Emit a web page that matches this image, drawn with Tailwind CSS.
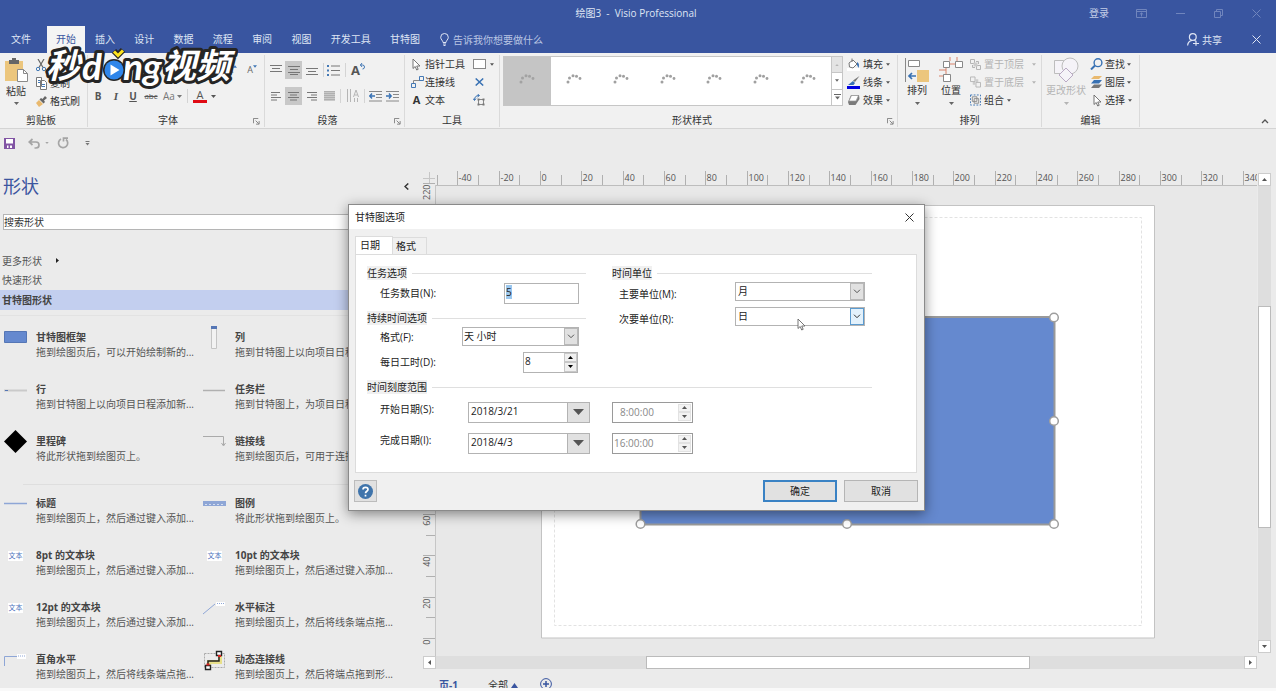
<!DOCTYPE html>
<html lang="zh-CN">
<head>
<meta charset="utf-8">
<title>绘图3 - Visio Professional</title>
<script src="https://cdn.jsdelivr.net/npm/@tailwindcss/browser@4"></script>
</head>
<body class="relative flex h-screen flex-col overflow-hidden bg-[#ebebeb] font-['Open_Sans','Noto_Sans_CJK_SC',sans-serif] text-[10px] leading-[14px] text-[#333]">
<svg class="hidden">
  <symbol id="dn" viewBox="0 0 5 3"><path d="M0 0h5L2.500 3z" fill="currentColor"/></symbol>
  <symbol id="up" viewBox="0 0 5 3"><path d="M0 3h5L2.500 0z" fill="currentColor"/></symbol>
  <symbol id="launch" viewBox="0 0 8 8"><path d="M.5 6V.5H6M3 3l3.500 3.500M7 3.500V7H3.500" fill="none" stroke="#777"/></symbol>
  <symbol id="chev" viewBox="0 0 8 5"><path d="M1 .7l3 3 3-3" fill="none" stroke="currentColor"/></symbol>
  <symbol id="cursor" viewBox="0 0 9 13"><path d="M1 1v9.500l2.200-2 1.500 3.500 1.500-.7-1.500-3.300H8z" fill="#fff" stroke="#666" stroke-width=".9"/></symbol>
  <symbol id="dots" viewBox="0 0 16 16"><g fill="currentColor"><circle cx="2" cy="9" r="1.500"/><circle cx="3.500" cy="5" r="1.500"/><circle cx="7" cy="2.800" r="1.500"/><circle cx="10.500" cy="3.300" r="1.500"/><circle cx="14" cy="5.500" r="1.400"/></g></symbol>
</svg>

<header class="shrink-0 bg-[#3955a0] text-[#dfe5f4]">
  <div class="relative flex h-[26px] items-center justify-end">
    <h1 class="absolute inset-x-0 pr-[4px] text-center whitespace-pre">绘图3  -  Visio Professional</h1>
    <button class="relative mr-[27px] text-[#c3cde6]">登录</button>
    <div class="relative flex items-center gap-[29px] pr-[15px] text-[#7085bd]">
      <button aria-label="功能区显示选项"><svg class="h-[9px] w-[11px]" viewBox="0 0 11 9" fill="none" stroke="currentColor"><path d="M.5.500h10v8H.5zM.5 2.500h10M5.500 7.500V4M3.800 5.500l1.700-1.600 1.700 1.600"/></svg></button>
      <button aria-label="最小化"><svg class="h-[9px] w-[9px]" viewBox="0 0 9 9" stroke="currentColor"><path d="M0 4.500h9"/></svg></button>
      <button aria-label="还原"><svg class="h-[9px] w-[9px]" viewBox="0 0 9 9" fill="none" stroke="currentColor"><path d="M.5 2.500h6v6h-6zM2.500 2V.5h6v6H7"/></svg></button>
      <button aria-label="关闭"><svg class="h-[9px] w-[9px]" viewBox="0 0 9 9" stroke="currentColor"><path d="M.5.500l8 8M8.500.500l-8 8"/></svg></button>
    </div>
  </div>
  <div class="flex h-[27px] items-center">
    <button class="w-[47px] pr-[5px] pb-[2px]">文件</button>
    <button class="mr-[10px] h-full w-[38px] bg-[#f4f4f4] pb-[2px] text-[#3955a0]">开始</button>
    <nav class="flex w-[325px] justify-between pb-[2px]"><button>插入</button><button>设计</button><button>数据</button><button>流程</button><button>审阅</button><button>视图</button><button>开发工具</button><button>甘特图</button></nav>
    <label class="ml-[20px] flex items-center gap-[4px]">
      <svg class="h-[13px] w-[9px]" viewBox="0 0 9 13" fill="none" stroke="currentColor"><path d="M3 9.500C3 7.500.7 6.800.7 4.300a3.800 3.800 0 0 1 7.600 0C8.300 6.800 6 7.500 6 9.500zM3 11h3M3.500 12.500h2"/></svg>
      <input class="w-[110px] bg-transparent placeholder:text-[#b9c5e3]" placeholder="告诉我你想要做什么" aria-label="告诉我你想要做什么">
    </label>
    <button class="ml-auto flex items-center gap-[3px]"><svg class="h-[13px] w-[12px]" viewBox="0 0 12 13" fill="none" stroke="currentColor" stroke-width="1.200"><circle cx="5.800" cy="4" r="3.400"/><path d="M.6 12.500C.8 9.500 2.500 8 5 7.400M7.500 7.200l1 .8M6 10.500h6M9 7.800v5"/></svg>共享</button>
    <button class="mx-[15px] ml-[30px]" aria-label="关闭文档"><svg class="h-[9px] w-[9px]" viewBox="0 0 9 9" stroke="currentColor"><path d="M.5.500l8 8M8.500.500l-8 8"/></svg></button>
  </div>
</header>

<section class="flex h-[76px] shrink-0 border-b border-[#d4d4d4] bg-[#f1f1f1] pt-[2px] pb-px">
  <div class="flex w-[88px] flex-col border-r border-[#dadada]">
    <div class="flex flex-1 gap-[8px] pl-[4px]">
      <button class="flex w-[24px] flex-col items-center">
        <svg class="h-[27px] w-[24px]" viewBox="0 0 24 27"><path d="M1 6h18v20H1z" fill="#ecc67d"/><path d="M5 5h10v4H5zM8 3h4v3H8z" fill="#666"/><path d="M13.500 14.500h6l4 4v8h-10z" fill="#fff" stroke="#8a8a8a"/><path d="M19.500 14.500v4h4" fill="none" stroke="#8a8a8a"/></svg>
        <span class="pt-[2px] whitespace-nowrap">粘贴</span><svg class="mt-[4px] h-[3px] w-[5px] text-[#666]"><use href="#dn"/></svg>
      </button>
      <div class="flex flex-col pt-px">
        <button class="flex h-[18px] items-center gap-[4px]"><svg class="h-[13px] w-[10px]" viewBox="0 0 10 13" fill="none"><path d="M2 0l5 8.500M8 0L3 8.500" stroke="#666" stroke-width="1.200"/><circle cx="2" cy="10" r="1.700" stroke="#4479b5"/><circle cx="8" cy="10" r="1.700" stroke="#4479b5"/></svg>剪切</button>
        <button class="flex h-[18px] items-center gap-[3px]"><svg class="h-[13px] w-[11px]" viewBox="0 0 11 13" fill="#fff" stroke="#777"><path d="M.5.500h5v9h-5zM4.500 3.500h4l2 2v7h-6z"/><path d="M6 7.500h3M6 9.500h3M2 3.500h2M2 5.500h2" stroke="#4479b5"/></svg>复制</button>
        <button class="flex h-[18px] items-center gap-[3px]"><svg class="h-[11px] w-[11px]" viewBox="0 0 11 11"><path d="M0 7l3-3 4 4-4 3z" fill="#e9b96e"/><path d="M3.500 3.500l1.500-1.500 1.500 1 2.500-3 2 2-3 2.500 1 1.500-1.500 1.500z" fill="#666"/></svg>格式刷</button>
      </div>
    </div>
    <div class="pr-[5px] text-center">剪贴板</div>
  </div>

  <div class="flex w-[177px] flex-col border-r border-[#dadada] pt-[2px]">
    <div class="flex h-[26px] items-center justify-end gap-[10px] pr-[7px] text-[#666]"><button class="flex items-start text-[9px] leading-[14px]">A<svg class="mt-[2px] h-[3px] w-[4px] text-[#3f77b5]"><use href="#up"/></svg></button><button class="flex items-start text-[9px] leading-[14px]">A<svg class="mt-[2px] h-[3px] w-[4px] text-[#3f77b5]"><use href="#dn"/></svg></button></div>
    <div class="flex h-[26px] items-center pl-[5px] text-[#555]">
      <button class="w-[10px] font-bold">B</button><button class="ml-[8px] w-[10px] font-['Liberation_Serif'] text-[11px] font-bold italic">I</button><button class="ml-[7px] w-[10px] font-bold underline">U</button><button class="ml-[6px] w-[14px] text-[8px] line-through">abc</button><button class="ml-[5px] flex items-center gap-[2px] text-[#777]">Aa<svg class="h-[3px] w-[5px]"><use href="#dn"/></svg></button>
      <span class="mx-[5px] h-[14px] w-px bg-[#d4d4d4]"></span>
      <button class="flex items-center gap-[4px]"><span class="w-[14px] border-b-[3px] border-[#e00b14] text-[11px] leading-[10px]">A</span><svg class="h-[3px] w-[5px]"><use href="#dn"/></svg></button>
    </div>
    <div class="relative mt-auto text-center pr-[16px]">字体<svg class="absolute right-[4px] bottom-[2px] h-[7px] w-[7px]"><use href="#launch"/></svg></div>
  </div>

  <div class="flex w-[140px] flex-col border-r border-[#dadada] pt-[2px]">
    <div class="flex h-[26px] items-center gap-[1px] pl-[2px]">
      <button class="grid h-[18px] w-[17px] place-items-center" aria-label="顶端对齐"><svg class="h-[11px] w-[12px]" viewBox="0 0 12 11" stroke="#777"><path d="M0 .5h12M2 3.500h8M0 6.500h12" /></svg></button>
      <button class="grid h-[18px] w-[17px] place-items-center bg-[#c8c8c8]" aria-label="中部对齐"><svg class="h-[11px] w-[12px]" viewBox="0 0 12 11" stroke="#777"><path d="M0 1.500h12M2 4.500h8M0 7.500h12M2 9.500h8"/></svg></button>
      <button class="grid h-[18px] w-[17px] place-items-center" aria-label="底端对齐"><svg class="h-[11px] w-[12px]" viewBox="0 0 12 11" stroke="#777"><path d="M0 3.500h12M2 6.500h8M0 9.500h12"/></svg></button>
      <span class="mx-[2px] h-[14px] w-px bg-[#d4d4d4]"></span>
      <button aria-label="项目符号"><svg class="h-[13px] w-[13px]" viewBox="0 0 13 13"><path d="M4 2h9M4 6.500h9M4 11h9" stroke="#777"/><path d="M0 1h2v2H0zM0 5.500h2v2H0zM0 10h2v2H0z" fill="#4479b5"/></svg></button>
      <span class="mx-[4px] h-[14px] w-px bg-[#d4d4d4]"></span>
      <button class="flex text-[13px] font-bold text-[#555]" aria-label="旋转文本">A<svg class="h-[8px] w-[5px]" viewBox="0 0 5 8" fill="none" stroke="#4479b5"><path d="M0 2h2.500a2 2 0 0 1 0 4M2 0L.5 2 2 4"/></svg></button>
    </div>
    <div class="flex h-[26px] items-center gap-[1px] pl-[2px]">
      <button class="grid h-[18px] w-[17px] place-items-center" aria-label="左对齐"><svg class="h-[9px] w-[10px]" viewBox="0 0 10 9" stroke="#777"><path d="M0 .5h9M0 3h6M0 5.500h10M0 8h6"/></svg></button>
      <button class="grid h-[18px] w-[17px] place-items-center bg-[#c8c8c8]" aria-label="居中"><svg class="h-[9px] w-[11px]" viewBox="0 0 11 9" stroke="#777"><path d="M0 .5h11M2 3h7M0 5.500h11M2 8h7"/></svg></button>
      <button class="grid h-[18px] w-[17px] place-items-center" aria-label="右对齐"><svg class="h-[9px] w-[10px]" viewBox="0 0 10 9" stroke="#777"><path d="M0 .5h10M4 3h6M0 5.500h10M4 8h6"/></svg></button>
      <button class="grid h-[18px] w-[16px] place-items-center" aria-label="两端对齐"><svg class="h-[10px] w-[11px]" viewBox="0 0 11 10" stroke="#b0b0b0"><path d="M0 0h11v10H0z" fill="#c9c9c9" stroke="none"/><path d="M0 .5h11M0 2.500h11M0 4.500h11M0 6.500h11M0 8.500h11"/></svg></button>
      <span class="mx-[2px] h-[14px] w-px bg-[#d4d4d4]"></span>
      <button class="ml-[2px]" aria-label="文字方向"><svg class="h-[14px] w-[14px]" viewBox="0 0 14 14" fill="none" stroke="#b5b5b5"><path d="M1.500 0v13M4.500 0v13M7.500 8l2.500-7 2.500 7M8.500 6h3M8.500 13v-4M11.500 13v-4"/></svg></button>
      <span class="mx-[3px] h-[14px] w-px bg-[#d4d4d4]"></span>
      <button aria-label="减少缩进"><svg class="h-[11px] w-[13px]" viewBox="0 0 13 11" fill="none"><path d="M0 .5h13M7 3.500h6M7 6.500h6M0 10h13" stroke="#888"/><path d="M6 5H1M3 2.500L.8 5 3 7.500" stroke="#3871b3" stroke-width="1.400"/></svg></button>
      <button class="ml-[3px]" aria-label="增加缩进"><svg class="h-[11px] w-[13px]" viewBox="0 0 13 11" fill="none"><path d="M0 .5h13M7 3.500h6M7 6.500h6M0 10h13" stroke="#888"/><path d="M0 5h5M3 2.500L5.200 5 3 7.500" stroke="#3871b3" stroke-width="1.400"/></svg></button>
    </div>
    <div class="relative mt-auto pr-[14px] text-center">段落<svg class="absolute right-[3px] bottom-[2px] h-[7px] w-[7px]"><use href="#launch"/></svg></div>
  </div>

  <div class="flex w-[95px] flex-col border-r border-[#dadada]">
    <div class="grid h-[54px] grid-cols-[61px_1fr] grid-rows-3 items-center pl-[7px]">
      <button class="flex items-center gap-[4px]"><svg class="h-[13px] w-[9px]"><use href="#cursor"/></svg>指针工具</button>
      <button class="flex items-center gap-[4px]" aria-label="矩形"><span class="h-[10px] w-[13px] border border-[#888] bg-white"></span><svg class="h-[3px] w-[4px] text-[#555]"><use href="#dn"/></svg></button>
      <button class="flex items-center gap-[1px]"><svg class="-ml-[1px] h-[12px] w-[13px]" viewBox="0 0 13 12" fill="none"><path d="M2.500 7V4.500H9" stroke="#888"/><path d="M.5 7.500h4v4h-4zM8.500.500h4v4h-4z" stroke="#4479b5"/></svg>连接线</button>
      <button class="pl-[2px]" aria-label="连接点"><svg class="h-[8px] w-[9px]" viewBox="0 0 9 8" stroke="#3871b3" stroke-width="1.500"><path d="M.7.500l7.500 7M8.200.500l-7.500 7"/></svg></button>
      <button class="flex items-center gap-[4px]"><b class="w-[9px] text-[11px]">A</b>文本</button>
      <button aria-label="文本块"><svg class="h-[12px] w-[12px]" viewBox="0 0 12 12" fill="none"><path d="M5.500 5.500h5v5h-5z" stroke="#888"/><path d="M4.500 4.500h2v2h-2zM9.500 4.500h2v2h-2zM4.500 9.500h2v2h-2zM9.500 9.500h2v2h-2z" fill="#777"/><path d="M1.500 6C1.500 3 3 1.500 6 1.500M4.500 0L6.500 1.500 4.500 3M0 4.500L1.500 6.500 3 4.500" stroke="#3871b3"/></svg></button>
    </div>
    <div class="mt-auto text-center">工具</div>
  </div>

  <div class="flex w-[398px] flex-col border-r border-[#dadada] pl-[3px]">
    <div class="flex h-[54px]">
      <div class="mt-px flex h-[50px] flex-1 border border-[#c6c6c6] bg-white text-[#a0a0a0]">
        <button class="grid flex-1 place-items-center bg-[#c5c5c5] text-[#a2a2a2]" aria-label="样式1"><svg class="h-[16px] w-[16px]"><use href="#dots"/></svg></button>
        <button class="grid flex-1 place-items-center" aria-label="样式2"><svg class="h-[16px] w-[16px]"><use href="#dots"/></svg></button>
        <button class="grid flex-1 place-items-center" aria-label="样式3"><svg class="h-[16px] w-[16px]"><use href="#dots"/></svg></button>
        <button class="grid flex-1 place-items-center" aria-label="样式4"><svg class="h-[16px] w-[16px]"><use href="#dots"/></svg></button>
        <button class="grid flex-1 place-items-center" aria-label="样式5"><svg class="h-[16px] w-[16px]"><use href="#dots"/></svg></button>
        <button class="grid flex-1 place-items-center" aria-label="样式6"><svg class="h-[16px] w-[16px]"><use href="#dots"/></svg></button>
        <button class="grid flex-1 place-items-center" aria-label="样式7"><svg class="h-[16px] w-[16px]"><use href="#dots"/></svg></button>
        <div class="flex w-[11px] flex-col divide-y divide-[#c6c6c6] border-l border-[#c6c6c6] text-[#666]">
          <button class="grid flex-1 place-items-center bg-[#e4e4e4] text-[#b5b5b5]" aria-label="上一行"><svg class="h-[2px] w-[4px]"><use href="#up"/></svg></button>
          <button class="grid flex-1 place-items-center" aria-label="下一行"><svg class="h-[3px] w-[4px]"><use href="#dn"/></svg></button>
          <button class="grid flex-1 place-items-center" aria-label="其他"><svg class="h-[6px] w-[7px]" viewBox="0 0 7 6"><path d="M0 .5h7" stroke="#666"/><path d="M1 2.500h5L3.500 5.500z" fill="#666"/></svg></button>
        </div>
      </div>
      <div class="grid w-[54px] grid-rows-3 items-center pl-[4px]">
        <button class="flex items-center gap-[3px]"><svg class="h-[13px] w-[13px]" viewBox="0 0 13 13"><path d="M0 10h13v3H0z" fill="#fff"/><path d="M2 5l4-3 4 4-4 4-3.500-1z" fill="#fff" stroke="#777"/><path d="M5 4V.5" stroke="#777"/><path d="M10 4c2 1 2.500 3 1.500 6l-1.500-3z" fill="#3871b3"/></svg>填充<svg class="h-[3px] w-[4px] text-[#555]"><use href="#dn"/></svg></button>
        <button class="flex items-center gap-[3px]"><svg class="h-[13px] w-[13px]" viewBox="0 0 13 13"><path d="M0 10h13v3H0z" fill="#0000e0"/><path d="M12.500 0L8 6 6 4.500z" fill="#777"/><path d="M6 5l2 2-1.500 2H1z" fill="#3871b3"/></svg>线条<svg class="h-[3px] w-[4px] text-[#555]"><use href="#dn"/></svg></button>
        <button class="flex items-center gap-[3px]"><svg class="h-[12px] w-[13px]" viewBox="0 0 13 12"><path d="M1 8l3-7h8l.5 4-4 6H2z" fill="#7b7b7b"/><path d="M2 7l2.500-5.500h7L9 7z" fill="#fff" stroke="#999" stroke-width=".7"/></svg>效果<svg class="h-[3px] w-[4px] text-[#555]"><use href="#dn"/></svg></button>
      </div>
    </div>
    <div class="relative mt-auto pr-[16px] text-center">形状样式<svg class="absolute right-[3px] bottom-[2px] h-[7px] w-[7px]"><use href="#launch"/></svg></div>
  </div>

  <div class="flex w-[144px] flex-col border-r border-[#dadada]">
    <div class="flex h-[54px] pl-[6px]">
      <button class="flex w-[26px] flex-col items-center pt-[2px]"><svg class="h-[26px] w-[24px]" viewBox="0 0 24 26"><path d="M.5 1v24" stroke="#888"/><path d="M3.500 3.500h11v6h-11z" fill="#fff" stroke="#888"/><path d="M12 13h12v12H12z" fill="#ecc67d"/><path d="M11 19H4.500M7 16l-3 3 3 3" fill="none" stroke="#3871b3" stroke-width="1.700"/></svg>排列<svg class="mt-[5px] h-[3px] w-[5px] text-[#666]"><use href="#dn"/></svg></button>
      <button class="ml-[8px] flex w-[26px] flex-col items-center pt-[2px]"><svg class="h-[26px] w-[24px]" viewBox="0 0 24 26" fill="#fff"><path d="M11 0v4M18 0v4M11 7h6M7 10v7M0 13h7M0 19h5" fill="none" stroke="#d9826b"/><path d="M4.500 4.500h6v6h-6zM16.500 4.500h7v6h-7zM4.500 17.500h7v7h-7z" stroke="#888"/></svg>位置<svg class="mt-[5px] h-[3px] w-[5px] text-[#666]"><use href="#dn"/></svg></button>
      <div class="ml-[6px] grid grid-rows-3 items-center">
        <button class="flex items-center gap-[3px] text-[#b4b4b4]" disabled><svg class="h-[11px] w-[11px]" viewBox="0 0 11 11" fill="none" stroke="currentColor"><path d="M.5.500h4v4h-4zM6 2.500h2.500V5M2.500 6v2.500H5M6.500 6.500h4v4h-4z"/><path d="M3.500 3.500h4v4h-4z" fill="#ccc" stroke="none"/></svg>置于顶层<svg class="ml-[5px] h-[3px] w-[4px]"><use href="#dn"/></svg></button>
        <button class="flex items-center gap-[3px] text-[#b4b4b4]" disabled><svg class="h-[12px] w-[11px]" viewBox="0 0 12 12" fill="none" stroke="currentColor"><path d="M.5.500h5v5h-5zM6.500 6.500h5v5h-5z"/><path d="M6 3h3v3H6zM3 6h3v3H3z" fill="#ccc" stroke="none"/></svg>置于底层<svg class="ml-[5px] h-[3px] w-[4px]"><use href="#dn"/></svg></button>
        <button class="flex items-center gap-[3px]"><svg class="h-[12px] w-[11px]" viewBox="0 0 12 12" fill="none"><path d="M.5.500h11v11H.5z" stroke="#3871b3" stroke-dasharray="2 1.500"/><path d="M2.500 2.500h5v5h-5zM4.500 4.500h5v5h-5z" stroke="#888"/></svg>组合<svg class="h-[3px] w-[4px] text-[#555]"><use href="#dn"/></svg></button>
      </div>
    </div>
    <div class="mt-auto text-center">排列</div>
  </div>

  <div class="flex w-[98px] flex-col border-r border-[#dadada]">
    <div class="flex h-[54px] pl-[3px]">
      <button class="flex w-[42px] flex-col items-center pt-[2px] text-[#b4b4b4]" disabled><svg class="h-[26px] w-[26px]" viewBox="0 0 26 26" fill="#f5f3f8" stroke="#bdbdbd"><path d="M1.500 3.500h12v13h-12z"/><circle cx="17" cy="9" r="8"/><path d="M13 11l7 7-7 7-7-7z" stroke="#b9a9c4"/></svg>更改形状<svg class="mt-[5px] h-[3px] w-[5px]"><use href="#dn"/></svg></button>
      <div class="ml-[3px] grid grid-rows-3 items-center">
        <button class="flex items-center gap-[2px]"><svg class="h-[12px] w-[13px]" viewBox="0 0 13 12" fill="none" stroke="#3871b3"><circle cx="8" cy="4.700" r="3.900" stroke-width="1.400"/><path d="M5 7.500L1 11.500" stroke-width="2"/></svg>查找<svg class="h-[3px] w-[4px] text-[#555]"><use href="#dn"/></svg></button>
        <button class="flex items-center gap-[2px]"><svg class="h-[12px] w-[13px]" viewBox="0 0 13 12"><path d="M4 0h8l-3 3H1z" fill="#e9b96e"/><path d="M4 4h8L9 7.500H1z" fill="#3871b3"/><path d="M4 8.500h8L9 12H1z" fill="#777"/></svg>图层<svg class="h-[3px] w-[4px] text-[#555]"><use href="#dn"/></svg></button>
        <button class="flex items-center gap-[3px] pl-[3px]"><svg class="h-[13px] w-[9px]"><use href="#cursor"/></svg>选择<svg class="h-[3px] w-[4px] text-[#555]"><use href="#dn"/></svg></button>
      </div>
    </div>
    <div class="mt-auto text-center">编辑</div>
  </div>
  <button class="mt-auto mr-[7px] mb-[3px] ml-auto" aria-label="折叠功能区"><svg class="h-[5px] w-[8px]" viewBox="0 0 8 5" fill="none" stroke="#555" stroke-width="1.300"><path d="M1 4l3-3 3 3"/></svg></button>
</section>

<div class="flex h-[28px] shrink-0 items-center pl-[4px] text-[#a5a5a5]">
  <button aria-label="保存"><svg class="h-[11px] w-[11px]" viewBox="0 0 11 11"><path d="M0 0h11v11H0z" fill="#8154a4"/><path d="M2 1h7v4.500H2zM3 7.500h1.500V10H3zM6 7.500h2V10H6z" fill="#fff"/></svg></button>
  <button class="ml-[13px]" aria-label="撤消"><svg class="h-[11px] w-[12px]" viewBox="0 0 12 11" fill="none" stroke="currentColor" stroke-width="1.700"><path d="M4.500 1L1.200 4l3.300 3M1.500 4H8a3 3 0 0 1 0 6H6.500"/></svg></button>
  <svg class="ml-[5px] h-[2px] w-[4px]"><use href="#dn"/></svg>
  <button class="ml-[8px]" aria-label="重复"><svg class="h-[12px] w-[12px]" viewBox="0 0 12 12" fill="none" stroke="currentColor" stroke-width="1.700"><path d="M9 2.500A4.600 4.600 0 1 1 4 2M6.500 4.500V1.200H11"/></svg></button>
  <button class="ml-[16px]" aria-label="自定义"><svg class="h-[5px] w-[5px]" viewBox="0 0 5 5"><path d="M.5.500h4" stroke="#777"/><path d="M.5 2h4L2.500 4.500z" fill="#777"/></svg></button>
</div>

<main class="flex min-h-0 flex-1">
  <aside class="w-[422px] shrink-0 overflow-hidden pt-[17px] text-[#555]">
    <div class="flex items-center pr-[13px] pl-[3px]"><h2 class="text-[18px] leading-[24px] text-[#3b559f]">形状</h2><button class="ml-auto" aria-label="最小化形状窗口"><svg class="h-[7px] w-[5px]" viewBox="0 0 5 7" fill="none" stroke="#333" stroke-width="1.500"><path d="M4.300.500L1 3.500l3.300 3"/></svg></button></div>
    <input class="mt-[16px] ml-[3px] block h-[16px] w-[400px] border border-[#b5b5b5] bg-white placeholder:text-[#333]" placeholder="搜索形状" aria-label="搜索形状">
    <button class="mt-[21px] flex h-[19px] items-center gap-[14px] pl-[2px]">更多形状<svg class="h-[5px] w-[3px]" viewBox="0 0 3 5"><path d="M0 0v5l3-2.500z" fill="#222"/></svg></button>
    <button class="block h-[20px] pl-[2px]">快速形状</button>
    <button class="block h-[20px] w-[418px] bg-[#c3cfef] pl-[2px] text-left font-bold text-[#444]">甘特图形状</button>
    <div class="mt-[5px] h-px w-[418px] bg-[#e2e2e2]"></div>
    <ul class="grid auto-rows-[52px] grid-cols-[199px_199px] pt-[14px] pl-[4px] leading-[15px] whitespace-nowrap">
      <li class="flex gap-[9px]"><svg class="h-[23px] w-[23px]" viewBox="0 0 23 23"><path d="M.5 1.500h22v11H.5z" fill="#6589cf" stroke="#5576b5"/></svg><div><b class="text-[#444]">甘特图框架</b><p>拖到绘图页后，可以开始绘制新的...</p></div></li>
      <li class="flex gap-[9px]"><svg class="-mt-[4px] h-[24px] w-[23px]" viewBox="0 0 23 24"><path d="M8.500 1.500h5v21h-5z" fill="#f2f2f2" stroke="#c4c4c4"/><path d="M8 0h6v3H8z" fill="#5576b5"/></svg><div><b class="text-[#444]">列</b><p>拖到甘特图上以向项目日程添加新...</p></div></li>
      <li class="flex gap-[9px]"><svg class="h-[23px] w-[23px]" viewBox="0 0 23 23"><path d="M0 8.500h23" stroke="#cacaca" stroke-width="2"/><path d="M1 8.500h3" stroke="#5576b5"/></svg><div><b class="text-[#444]">行</b><p>拖到甘特图上以向项目日程添加新...</p></div></li>
      <li class="flex gap-[9px]"><svg class="h-[23px] w-[23px]" viewBox="0 0 23 23"><path d="M0 8.500h22" stroke="#b0b0b0" stroke-width="1.500"/></svg><div><b class="text-[#444]">任务栏</b><p>拖到甘特图上，为项目日程添加任...</p></div></li>
      <li class="flex gap-[9px]"><svg class="-mt-[4px] h-[23px] w-[23px]" viewBox="0 0 23 23"><path d="M11.500 0L23 11.500 11.500 23 0 11.500z" fill="#000"/></svg><div><b class="text-[#444]">里程碑</b><p>将此形状拖到绘图页上。</p></div></li>
      <li class="flex gap-[9px]"><svg class="h-[23px] w-[23px]" viewBox="0 0 23 23" fill="none" stroke="#aaa"><path d="M0 2.500h20.500V11M18.500 9l2 3 2-3"/></svg><div><b class="text-[#444]">链接线</b><p>拖到绘图页后，可用于连接任务或...</p></div></li>
    </ul>
    <div class="-mt-[2px] ml-[23px] h-px w-[395px] bg-[#dedede]"></div>
    <ul class="grid auto-rows-[52px] grid-cols-[199px_199px] pt-[11px] pl-[4px] leading-[15px] whitespace-nowrap">
      <li class="flex gap-[9px]"><svg class="h-[23px] w-[23px]" viewBox="0 0 23 23"><path d="M0 7.500h23" stroke="#8ea6d6" stroke-width="1.500"/></svg><div><b class="text-[#444]">标题</b><p>拖到绘图页上，然后通过键入添加...</p></div></li>
      <li class="flex gap-[9px]"><svg class="h-[23px] w-[23px]" viewBox="0 0 23 23"><path d="M0 5h23v5H0z" fill="#8ea6d6"/><path d="M2 8.500h19" stroke="#d5def0" stroke-dasharray="2 2"/></svg><div><b class="text-[#444]">图例</b><p>将此形状拖到绘图页上。</p></div></li>
      <li class="flex gap-[9px]"><span class="mt-[3px] mr-[4px] ml-[4px] h-[10px] w-[15px] bg-white text-center text-[7px] leading-[9px] text-[#4d72bd]">文本</span><div><b class="text-[#444]">8pt 的文本块</b><p>拖到绘图页上，然后通过键入添加...</p></div></li>
      <li class="flex gap-[9px]"><span class="mt-[3px] mr-[4px] ml-[4px] h-[10px] w-[15px] bg-white text-center text-[7px] leading-[9px] text-[#4d72bd]">文本</span><div><b class="text-[#444]">10pt 的文本块</b><p>拖到绘图页上，然后通过键入添加...</p></div></li>
      <li class="flex gap-[9px]"><span class="mt-[3px] mr-[4px] ml-[4px] h-[10px] w-[15px] bg-white text-center text-[7px] leading-[9px] text-[#4d72bd]">文本</span><div><b class="text-[#444]">12pt 的文本块</b><p>拖到绘图页上，然后通过键入添加...</p></div></li>
      <li class="flex gap-[9px]"><svg class="h-[23px] w-[23px]" viewBox="0 0 23 23"><path d="M13 2h9v4h-9z" fill="#fff"/><path d="M0 14L12 4" stroke="#8ea6d6"/><path d="M14 3.500h8" stroke="#8ea6d6" stroke-dasharray="1 1"/></svg><div><b class="text-[#444]">水平标注</b><p>拖到绘图页上，然后将线条端点拖...</p></div></li>
      <li class="flex gap-[9px]"><svg class="h-[23px] w-[23px]" viewBox="0 0 23 23" fill="none"><path d="M13 2h9v5h-9z" fill="#fff"/><path d="M.5 14V4.500H13" stroke="#8ea6d6"/><path d="M14 4h8" stroke="#8ea6d6" stroke-dasharray="1 1"/></svg><div><b class="text-[#444]">直角水平</b><p>拖到绘图页上，然后将线条端点拖...</p></div></li>
      <li class="flex gap-[9px]"><svg class="-mt-[2px] h-[23px] w-[23px]" viewBox="0 0 23 23" fill="none"><path d="M1.500 3.500h20v14h-20z" stroke="#aaa" stroke-dasharray="2 1"/><path d="M6 17v-5h11V5" stroke="#e8e08a" stroke-width="4"/><path d="M5 15v-4h11V5" stroke="#222" stroke-width="1.500"/><path d="M13.500 1.500h5v4h-5zM2.500 15.500h5v4h-5z" fill="#fff" stroke="#222" stroke-width="1.400"/><path d="M15 5h3v2h-3zM3.500 13.500h3v2h-3z" fill="#d22"/></svg><div><b class="text-[#444]">动态连接线</b><p>拖到绘图页上，然后将端点拖到形...</p></div></li>
    </ul>
  </aside>

  <section class="flex min-w-0 flex-1 flex-col pr-[5px]">
    <div class="flex min-h-0 flex-1">
      <svg id="vruler" class="h-full w-[14px] shrink-0 text-[9px]"></svg>
      <div class="flex min-w-0 flex-1 flex-col">
        <svg id="hruler" class="h-[29px] w-full shrink-0 text-[9px]"></svg>
        <svg class="min-h-0 w-full flex-1 bg-[#e8e8e8]">
          <path d="M105.500 19.500h613v432.500h-613z" fill="#fff" stroke="#c3c3c3"/>
          <path d="M118.500 31.500h587v408h-587z" fill="none" stroke="#e2e2e2" stroke-dasharray="3 2"/>
          <path d="M204.500 131h414v207.500h-414z" fill="#6589cf" stroke="#999" stroke-width="2"/>
          <g fill="#fff" stroke="#9e9e9e" stroke-width="1.500"><circle cx="618" cy="131.500" r="4.300"/><circle cx="618" cy="235" r="4.300"/><circle cx="618" cy="338" r="4.300"/><circle cx="411" cy="338" r="4.300"/><circle cx="204.500" cy="338" r="4.300"/></g>
        </svg>
      </div>
      <div class="mt-[16px] mb-[3px] ml-px flex w-[13px] shrink-0 flex-col bg-[#dedede] text-[#555]">
        <button class="grid h-[13px] place-items-center border border-[#ccc] bg-white" aria-label="向上滚动"><svg class="h-[3px] w-[5px]"><use href="#up"/></svg></button>
        <div class="grow-[121]"></div><div class="grow-[221] border border-[#bbb] bg-white"></div><div class="grow-[113]"></div>
        <button class="grid h-[13px] place-items-center border border-[#ccc] bg-white" aria-label="向下滚动"><svg class="h-[3px] w-[5px]"><use href="#dn"/></svg></button>
      </div>
    </div>
    <div class="mr-[14px] ml-px flex h-[13px] shrink-0 bg-[#dedede]">
      <button class="grid w-[13px] place-items-center border border-[#ccc] bg-white" aria-label="向左滚动"><svg class="h-[5px] w-[3px]" viewBox="0 0 3 5"><path d="M3 0v5L0 2.500z" fill="#555"/></svg></button>
      <div class="grow-[211]"></div><div class="grow-[383] border border-[#bbb] bg-white"></div><div class="grow-[215]"></div>
      <button class="grid w-[13px] place-items-center border border-[#ccc] bg-white" aria-label="向右滚动"><svg class="h-[5px] w-[3px]" viewBox="0 0 3 5"><path d="M0 0v5l3-2.500z" fill="#555"/></svg></button>
    </div>
    <div class="flex h-[19px] shrink-0 items-start overflow-hidden pt-[9px] pl-[17px]">
      <button class="font-bold text-[#3955a0]">页-1</button>
      <button class="ml-[30px] flex items-center gap-[3px]">全部<svg class="h-[5px] w-[7px] text-[#3955a0]" viewBox="0 0 7 5"><path d="M0 5h7L3.500 0z" fill="currentColor"/></svg></button>
      <button class="ml-[22px]" aria-label="插入页"><svg class="h-[12px] w-[12px]" viewBox="0 0 12 12" fill="none" stroke="#3955a0"><circle cx="6" cy="6" r="5.400"/><path d="M6 3v6M3 6h6" stroke-width="1.500"/></svg></button>
    </div>
  </section>
</main>
<div class="h-[3px] shrink-0 bg-[#f9f9f9]"></div>

<div role="dialog" aria-labelledby="dlg-title" class="absolute top-[204px] left-[348px] flex w-[577px] flex-col border border-[#8a8a8a] bg-[#f0f0f0] text-[#222] shadow-[0_3px_12px_rgba(0,0,0,0.45)]">
  <div class="flex h-[24px] items-center justify-between bg-white pr-[10px] pl-[6px]"><h2 id="dlg-title">甘特图选项</h2><button aria-label="关闭对话框"><svg class="h-[9px] w-[9px]" viewBox="0 0 9 9" stroke="#333"><path d="M.5.500l8 8M8.500.500l-8 8"/></svg></button></div>
  <div class="flex items-end pt-[7px] pl-[6px]">
    <button class="h-[18px] w-[38px] border border-b-0 border-[#dcdcdc] bg-white pr-[8px] pb-px">日期</button><button class="h-[17px] w-[34px] border border-b-0 border-l-0 border-[#dcdcdc] pr-[7px]">格式</button>
  </div>
  <form class="mr-[7px] ml-[6px] flex h-[219px] flex-col border border-[#dcdcdc] bg-white px-[11px] pt-[10px]">
    <div class="flex gap-[26px]">
      <div class="w-[219px]">
        <div class="flex h-[16px] items-center gap-[5px]"><span class="bg-[#f0f0f0]">任务选项</span><i class="h-px flex-1 bg-[#dfdfdf]"></i></div>
        <div class="flex h-[24px] items-center justify-between pr-[7px] pl-[13px]"><label for="n">任务数目(N):</label><div class="flex h-[21px] w-[75px] border border-[#b3b3b3] bg-white pl-px"><input id="n" class="w-full pb-[3px] selection:bg-[#9cc8ee] selection:text-[#222]" value="5"></div></div>
        <div class="mt-[5px] flex h-[16px] items-center gap-[5px]"><span class="bg-[#f0f0f0]">持续时间选项</span><i class="h-px flex-1 bg-[#dfdfdf]"></i></div>
        <div class="flex h-[20px] items-center justify-between pr-[7px] pl-[13px]"><label for="f" class="pt-[2px]">格式(F):</label><div class="relative h-[19px] w-[117px]"><select id="f" class="h-full w-full appearance-none border border-[#b3b3b3] bg-white pb-px pl-px"><option>天 小时</option></select><span class="pointer-events-none absolute inset-y-px right-px grid w-[14px] place-items-center border border-[#b8b8b8] bg-[#e1e1e1] text-[#555]"><svg class="h-[5px] w-[8px]"><use href="#chev"/></svg></span></div></div>
        <div class="flex h-[32px] items-center justify-between pr-[8px] pl-[13px]"><label for="d">每日工时(D):</label><div class="flex h-[21px] w-[55px] border border-[#b3b3b3] bg-white pl-px"><input id="d" class="min-w-0 flex-1 pb-[3px]" value="8"><span class="flex w-[13px] flex-col"><button type="button" class="grid flex-1 place-items-center border border-[#c8c8c8] bg-[#f0f0f0] text-black" aria-label="增加工时"><svg class="h-[3px] w-[5px]"><use href="#up"/></svg></button><button type="button" class="grid flex-1 place-items-center border border-[#c8c8c8] bg-[#f0f0f0] text-black" aria-label="减少工时"><svg class="h-[3px] w-[5px]"><use href="#dn"/></svg></button></span></div></div>
      </div>
      <div class="w-[260px]">
        <div class="flex h-[16px] items-center gap-[5px]"><span class="bg-[#f0f0f0]">时间单位</span><i class="h-px flex-1 bg-[#dfdfdf]"></i></div>
        <div class="flex h-[25px] items-center justify-between pr-[7px] pl-[7px]"><label for="m">主要单位(M):</label><div class="relative mb-[4px] h-[19px] w-[130px]"><select id="m" class="h-full w-full appearance-none border border-[#b3b3b3] bg-white pb-px pl-[2px]"><option>月</option></select><span class="pointer-events-none absolute inset-y-px right-px grid w-[14px] place-items-center border border-[#b8b8b8] bg-[#e1e1e1] text-[#555]"><svg class="h-[5px] w-[8px]"><use href="#chev"/></svg></span></div></div>
        <div class="flex h-[25px] items-center justify-between pr-[7px] pl-[7px]"><label for="r">次要单位(R):</label><div class="relative mb-[4px] h-[19px] w-[130px]"><select id="r" class="h-full w-full appearance-none border border-[#b3b3b3] bg-white pb-px pl-[2px]"><option>日</option></select><span class="pointer-events-none absolute inset-y-px right-px grid w-[14px] place-items-center border border-[#5b9bd0] bg-[#e3f1fb] text-[#333]"><svg class="h-[5px] w-[8px]"><use href="#chev"/></svg></span></div></div>
      </div>
    </div>
    <div class="mt-px flex h-[16px] w-[505px] items-center gap-[5px]"><span class="bg-[#f0f0f0]">时间刻度范围</span><i class="h-px flex-1 bg-[#dfdfdf]"></i></div>
    <div class="flex h-[34px] items-center pl-[13px]"><label for="s" class="w-[88px] pb-[6px]">开始日期(S):</label>
      <div class="flex h-[21px] w-[122px] border border-[#b3b3b3] bg-white"><input id="s" class="min-w-0 flex-1 pb-[3px] pl-[2px]" value="2018/3/21"><button type="button" class="grid w-[22px] place-items-center border-l border-[#b3b3b3] bg-[#e1e1e1] text-[#555]" aria-label="选择开始日期"><svg class="h-[6px] w-[11px]" viewBox="0 0 11 6"><path d="M0 0h11L5.500 6z" fill="#555"/></svg></button></div>
      <div class="ml-[22px] flex h-[21px] w-[81px] border border-[#9a9a9a] bg-white py-px pr-px text-[#888]"><input class="min-w-0 flex-1 pl-[7px]" value="8:00:00" disabled aria-label="开始时间"><span class="flex w-[13px] flex-col text-[#555]"><button type="button" class="grid flex-1 place-items-center border border-[#e2e2e2] bg-[#f3f3f3]" aria-label="开始时间增加"><svg class="h-[3px] w-[5px]"><use href="#up"/></svg></button><button type="button" class="grid flex-1 place-items-center border border-[#e2e2e2] bg-[#f3f3f3]" aria-label="开始时间减少"><svg class="h-[3px] w-[5px]"><use href="#dn"/></svg></button></span></div>
    </div>
    <div class="flex h-[28px] items-center pl-[13px]"><label for="e" class="w-[88px] pb-[6px]">完成日期(I):</label>
      <div class="flex h-[21px] w-[122px] border border-[#b3b3b3] bg-white"><input id="e" class="min-w-0 flex-1 pb-[3px] pl-[2px]" value="2018/4/3"><button type="button" class="grid w-[22px] place-items-center border-l border-[#b3b3b3] bg-[#e1e1e1] text-[#555]" aria-label="选择完成日期"><svg class="h-[6px] w-[11px]" viewBox="0 0 11 6"><path d="M0 0h11L5.500 6z" fill="#555"/></svg></button></div>
      <div class="ml-[22px] flex h-[21px] w-[81px] border border-[#9a9a9a] bg-white py-px pr-px text-[#888]"><input class="min-w-0 flex-1 pl-px" value="16:00:00" disabled aria-label="完成时间"><span class="flex w-[13px] flex-col text-[#555]"><button type="button" class="grid flex-1 place-items-center border border-[#e2e2e2] bg-[#f3f3f3]" aria-label="完成时间增加"><svg class="h-[3px] w-[5px]"><use href="#up"/></svg></button><button type="button" class="grid flex-1 place-items-center border border-[#e2e2e2] bg-[#f3f3f3]" aria-label="完成时间减少"><svg class="h-[3px] w-[5px]"><use href="#dn"/></svg></button></span></div>
    </div>
  </form>
  <div class="flex gap-[7px] pt-[7px] pr-[6px] pb-[8px] pl-[5px]">
    <button class="mr-auto grid h-[22px] w-[23px] place-items-center border border-[#bcbcbc] bg-[#e1e1e1]" aria-label="帮助"><svg class="h-[15px] w-[15px]" viewBox="0 0 15 15" fill="none"><circle cx="7.500" cy="7.500" r="7.500" fill="#3f74ab"/><path d="M5 5.500C5 2.600 10 2.600 10 5.500 10 7.300 7.500 7.300 7.500 9.300M7.500 10.800v1.700" stroke="#fff" stroke-width="1.700"/></svg></button>
    <button class="h-[22px] w-[74px] border-2 border-[#3a82c4] bg-[#e1e1e1]">确定</button>
    <button class="h-[22px] w-[74px] border border-[#b5b5b5] bg-[#e1e1e1]">取消</button>
  </div>
</div>
<svg class="pointer-events-none absolute top-[318px] left-[797px] h-[13px] w-[9px]"><use href="#cursor"/></svg>

<svg class="pointer-events-none absolute top-[44px] left-[42px] h-[52px] w-[196px] font-bold italic" viewBox="0 0 196 52" role="img" aria-label="秒dong视频">
  <g fill="#fff" stroke="#252525" stroke-width="6" stroke-linejoin="round" paint-order="stroke">
    <g font-size="34" class="font-['Noto_Sans_CJK_SC']"><text x="4" y="34">秒</text><text x="120" y="34">视频</text></g>
    <g font-size="37" class="font-['Lato']"><text x="40" y="36">d</text><text x="81" y="36">ng</text></g>
  </g>
  <circle cx="72" cy="26" r="11" fill="#252525"/><circle cx="72" cy="26" r="9.500" fill="#2f86ea"/><path d="M68.500 20.500l9 5.500-9 5.500z" fill="#fff"/>
  <path d="M72 7l4 4 5-5" fill="none" stroke="#252525" stroke-width="6"/><path d="M72 7.500l4 4 5-5" fill="none" stroke="#ffe51e" stroke-width="3"/>
</svg>

<script>
const NS = 'http://www.w3.org/2000/svg';
function add(parent, tag, attrs, text) {
  const el = document.createElementNS(NS, tag);
  for (const k in attrs) el.setAttribute(k, attrs[k]);
  if (text !== undefined) el.textContent = text;
  parent.appendChild(el);
}
const step = 41.34;
const h = document.getElementById('hruler');
add(h, 'path', {d: 'M0 28.500H2000', stroke: '#bdbdbd'});
for (let v = -50; v <= 340; v += 10) {
  const x = Math.round(104 + v / 20 * step) + 0.5, major = v % 20 === 0;
  add(h, 'path', {d: `M${x} ${major ? 14 : 18}V28`, stroke: '#b0b0b0'});
  if (major) add(h, 'text', {x: x + 1, y: 24, fill: '#555'}, v);
}
const r = document.getElementById('vruler');
add(r, 'path', {d: 'M13.500 28V499M1 21.500h12M7.500 15v12', stroke: '#c6c6c6', fill: 'none'});
for (let v = 0; v <= 220; v += 10) {
  const y = Math.round(481 - v / 20 * step) + 0.5, major = v % 20 === 0;
  add(r, 'path', {d: `M${major ? 1 : 4} ${y}H13`, stroke: '#b0b0b0'});
  if (major) add(r, 'text', {transform: `translate(8 ${y + 1}) rotate(-90)`, 'text-anchor': 'end', fill: '#555'}, v);
}
const n = document.getElementById('n');
n.focus();
n.select();
n.style.outline = 'none';
</script>
</body>
</html>
